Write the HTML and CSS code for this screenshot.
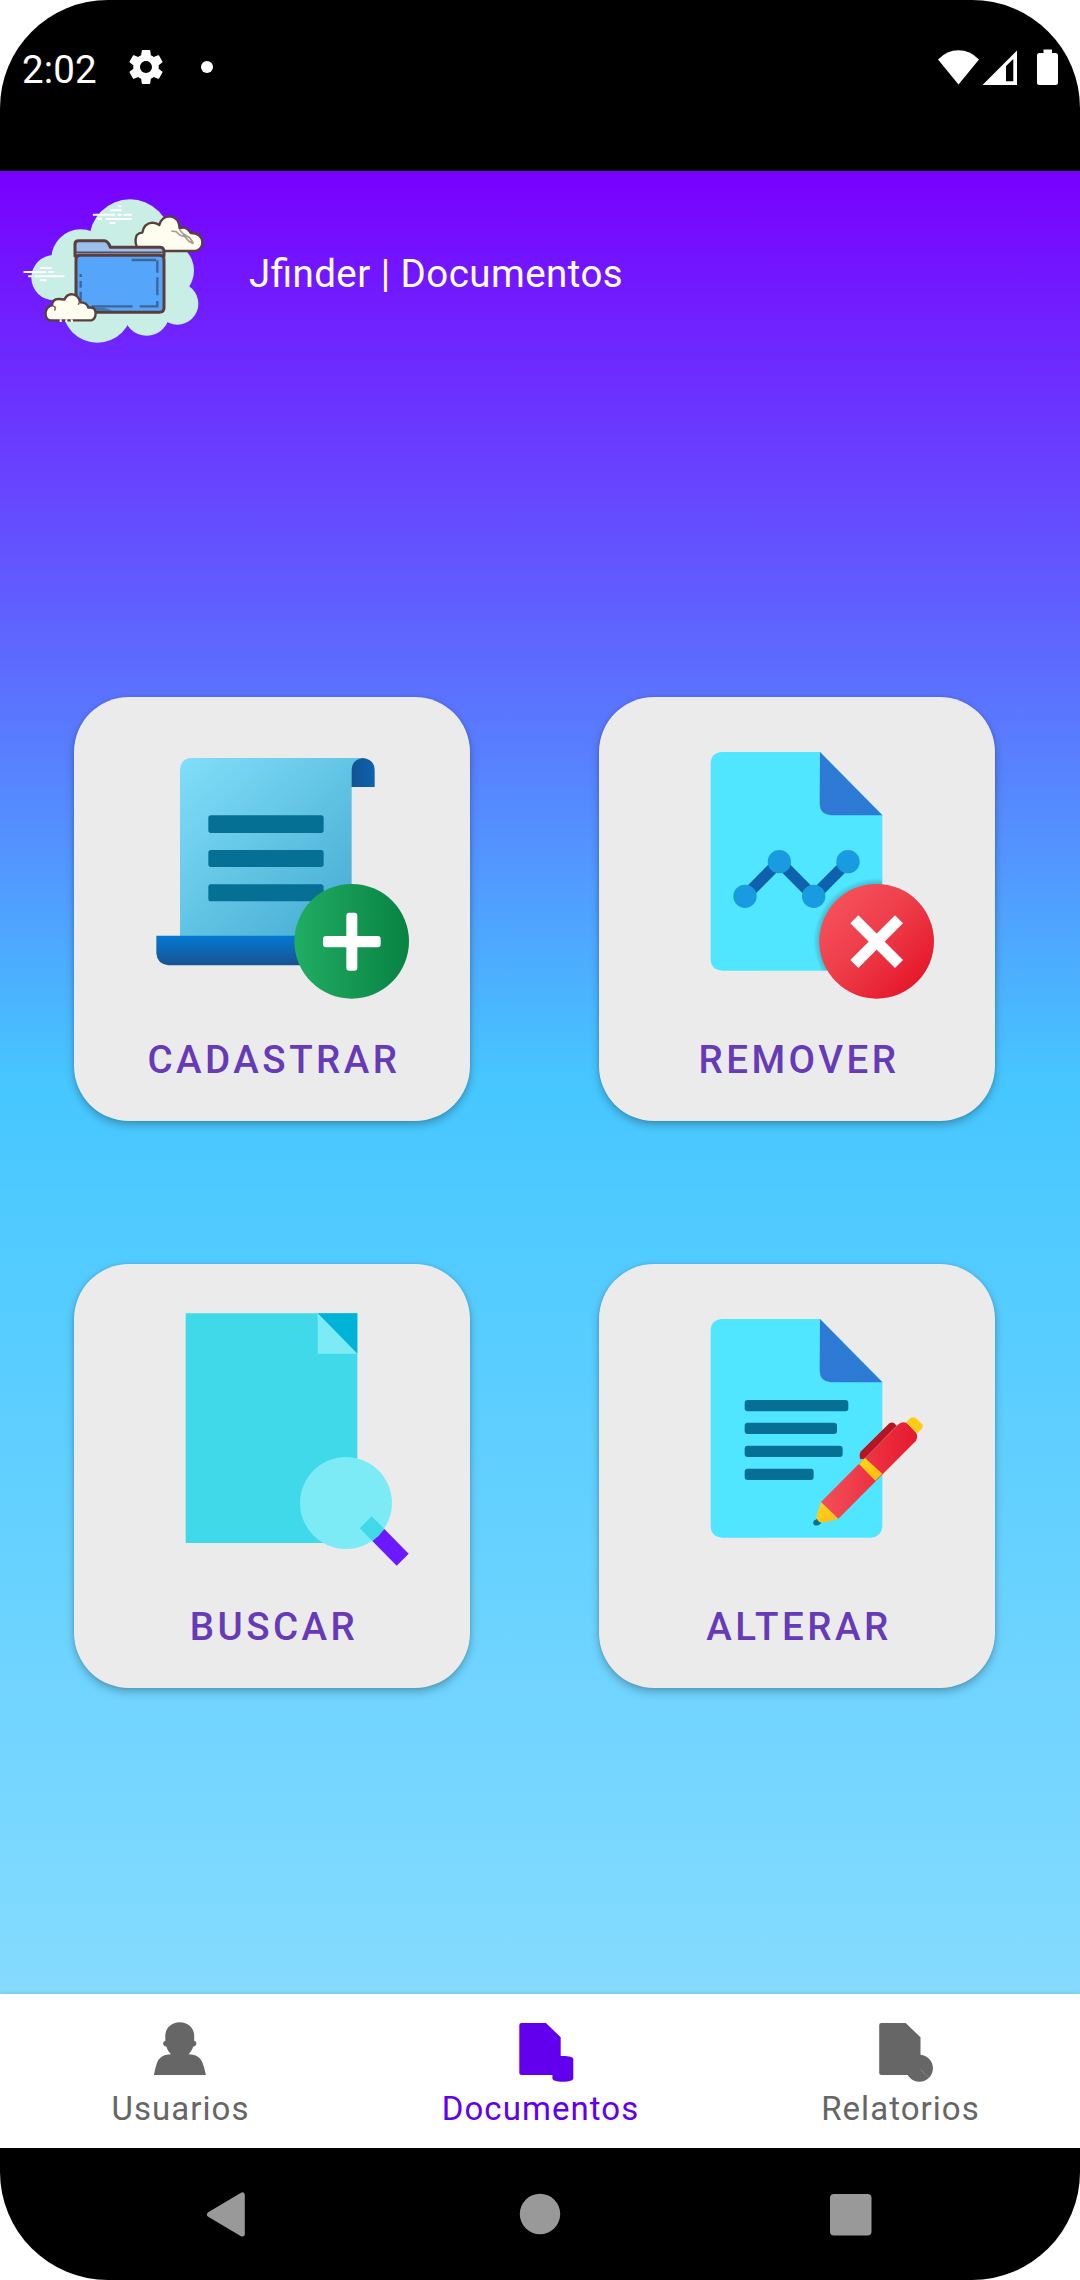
FILE: index.html
```html
<!DOCTYPE html>
<html lang="pt">
<head>
<meta charset="utf-8">
<title>Jfinder | Documentos</title>
<link rel="stylesheet" href="styles.css">
</head>
<body>
<div class="screen">
  <header class="status">
    <span class="clock">2:02</span>
    <svg class="gear" viewBox="2 2 20 20"><path fill="#fff" fill-rule="evenodd" d="M19.43 12.98c.04-.32.07-.64.07-.98s-.03-.66-.07-.98l2.11-1.65c.19-.15.24-.42.12-.64l-2-3.46c-.12-.22-.39-.3-.61-.22l-2.49 1c-.52-.4-1.08-.73-1.69-.98l-.38-2.65C14.46 2.18 14.25 2 14 2h-4c-.25 0-.46.18-.49.42l-.38 2.65c-.61.25-1.17.59-1.69.98l-2.49-1c-.23-.09-.49 0-.61.22l-2 3.46c-.13.22-.07.49.12.64l2.11 1.65c-.04.32-.07.65-.07.98s.03.66.07.98l-2.11 1.65c-.19.15-.24.42-.12.64l2 3.46c.12.22.39.3.61.22l2.49-1c.52.4 1.08.73 1.69.98l.38 2.65c.03.24.24.42.49.42h4c.25 0 .46-.18.49-.42l.38-2.65c.61-.25 1.17-.59 1.69-.98l2.49 1c.23.09.49 0 .61-.22l2-3.46c.12-.22.07-.49-.12-.64l-2.11-1.65zM12 15.5c-1.93 0-3.5-1.57-3.5-3.5s1.57-3.5 3.5-3.5 3.5 1.57 3.500 3.5-1.57 3.5-3.500 3.500z"/></svg>
    <span class="dot"></span>
    <svg class="indicators" viewBox="0 0 120 37" fill="#fff">
      <path d="M0 10.500Q9 1.300 20.500 1.300T41 10.500L20.500 35.500Z"/>
      <path fill-rule="evenodd" d="M44.500 36L79 1.500V36ZM68 17V32.300H75.300V10Z"/>
      <path d="M105.500 .500H114V4H117.500Q120 4 120 6.500V33.500Q120 36 117.500 36H101.500Q99 36 99 33.500V6.500Q99 4 101.500 4H105.500Z"/>
    </svg>
  </header>

  <main class="content">
    <div class="titlebar">
      <svg class="logo" viewBox="0 0 630 540">
        <g fill="#c8eee6">
          <circle cx="360" cy="180" r="122"/><circle cx="212" cy="236" r="88"/><circle cx="132" cy="293" r="68"/>
          <circle cx="262" cy="383" r="105"/><circle cx="410" cy="398" r="69"/><circle cx="502" cy="371" r="63"/>
          <circle cx="465" cy="272" r="87"/><path d="M200 180H480V410H200Z"/>
        </g>
        <g stroke="#fff" stroke-width="6" stroke-linecap="round" fill="none">
          <path d="M326 79h6M302 91h30M251 104h62M325 104h8M343 104h21M265 117h8M289 117h74M301 129h13"/>
          <path d="M93 264h30M43 276h64M117 276h14M57 289h8M76 289h85M92 301h15"/>
        </g>
        <path d="M388 213Q370 189 380 166Q387 158 397 158Q402 130 427 128Q439 129 448 135Q455 109 480 109Q507 112 509 145Q529 137 542 159Q573 158 577 185Q578 207 557 213Z" fill="#fffcf0" stroke="#593e3c" stroke-width="7" stroke-linejoin="round"/>
        <path d="M484 153l15 2 11 11 14 3 13 15 13 7M509 150l12 13 18 10 11 16" fill="none" stroke="#a89b91" stroke-width="5"/>
        <path d="M195 228V192Q195 182 206 182H283Q294 182 301 202H451Q462 203 462 216V228Z" fill="#9dbfeb" stroke="#593e3c" stroke-width="9" stroke-linejoin="round"/>
        <path d="M196 217H462" stroke="#5c4a4e" stroke-width="5"/>
        <path d="M198 385V239Q198 226 210 226H448Q462 226 462 240V383Q462 396 448 397H212Q198 397 198 385Z" fill="#55a6fb" stroke="#593e3c" stroke-width="9"/>
        <path d="M245 379H368M389 379H442V363M442 346V292M442 278V241M365 240H438M212 282v9M212 303v20M212 335v32" fill="none" stroke="#3b6798" stroke-width="7"/>
        <path d="M250 382Q290 381 307 393H250Z" fill="#4575ab"/>
        <path d="M120 421Q105 417 107 397Q110 379 126 376Q127 356 148 357L163 359Q171 341 188 343Q206 345 210 367Q231 367 235 383Q257 379 257 401Q256 418 244 421Z" fill="#fffcf0" stroke="#593e3c" stroke-width="7" stroke-linejoin="round"/>
        <path d="M128 377l8 5-2 10M209 367l-5 7" fill="none" stroke="#806d67" stroke-width="5"/>
        <path d="M152 418v8M169 418v8M184 418l3 8" stroke="#fff" stroke-width="6"/>
      </svg>
      <h1 class="title">Jfinder | Documentos</h1>
    </div>

    <div class="grid">
      <button class="card">
        <svg class="art" viewBox="222 132 825 825">
          <defs>
            <linearGradient id="sheet" x1="0" y1="0" x2="1" y2="1"><stop offset="0" stop-color="#81def8"/><stop offset="1" stop-color="#42a9d0"/></linearGradient>
            <linearGradient id="roll" x1="0" y1="0" x2="0" y2="1"><stop offset="0" stop-color="#0479d3"/><stop offset="1" stop-color="#175391"/></linearGradient>
            <linearGradient id="curl"><stop offset="0" stop-color="#164f8d"/><stop offset="1" stop-color="#0b62ad"/></linearGradient>
            <linearGradient id="green"><stop offset="0" stop-color="#21ad64"/><stop offset="1" stop-color="#088242"/></linearGradient>
          </defs>
          <path fill="url(#curl)" d="M858 234H909Q944 238 944 272V321H870V245Z"/>
          <path fill="url(#sheet)" d="M360 770V268Q362 236 394 234H909Q875 238 875 272V770Z"/>
          <path fill="url(#roll)" d="M289 767H800V856H325Q291 852 289 820Z"/>
          <g fill="#057093"><rect x="445" y="406" width="346" height="53" rx="8"/><rect x="445" y="510" width="346" height="51" rx="8"/><rect x="445" y="613" width="346" height="51" rx="8"/></g>
          <circle cx="875" cy="784" r="172" fill="url(#green)"/>
          <path fill="#fff" d="M868 698h15q9 0 9 9v61h61q9 0 9 9v16q0 9-9 9h-61v61q0 9-9 9h-15q-9 0-9-9v-61h-61q-9 0-9-9v-16q0-9 9-9h61v-61q0-9 9-9z"/>
        </svg>
        <span class="label">CADASTRAR</span>
      </button>
      <button class="card">
        <svg class="art" viewBox="237 132 825 825">
          <defs>
            <linearGradient id="fold" x1="0" y1="1" x2="1" y2="0"><stop offset="0" stop-color="#3079d6"/><stop offset="1" stop-color="#297cd2"/></linearGradient>
            <linearGradient id="red" x1=".15" y1=".15" x2=".85" y2=".85"><stop offset="0" stop-color="#f44f5a"/><stop offset=".45" stop-color="#ee3d4a"/><stop offset="1" stop-color="#e5192c"/></linearGradient>
            <radialGradient id="halo"><stop offset=".88" stop-color="#000" stop-opacity=".22"/><stop offset="1" stop-color="#000" stop-opacity="0"/></radialGradient>
            <clipPath id="page"><path d="M427 216H720L907 404V872H427Q393 870 392 838V250Q393 218 427 216Z"/></clipPath>
          </defs>
          <path fill="#50e6ff" d="M427 216H720L907 404V838Q905 870 873 872H427Q393 870 392 838V250Q393 218 427 216Z"/>
          <path fill="url(#fold)" d="M720 216L907 406H753Q720 404 719 372Z"/>
          <path d="M495 649L598 545L701 649L804 545" fill="none" stroke="#0d62ab" stroke-width="34"/>
          <g fill="#199be2"><circle cx="495" cy="649" r="35"/><circle cx="598" cy="545" r="35"/><circle cx="701" cy="649" r="35"/><circle cx="804" cy="545" r="35"/></g>
          <circle cx="890" cy="784" r="190" fill="url(#halo)" clip-path="url(#page)"/>
          <circle cx="890" cy="784" r="172" fill="url(#red)"/>
          <path d="M835 730L945 840M945 730L835 840" stroke="#fff" stroke-width="34" stroke-linecap="square"/>
        </svg>
        <span class="label">REMOVER</span>
      </button>
      <button class="card">
        <svg class="art" viewBox="222 123 825 825">
          <path fill="#3fd9ea" d="M377 190H892V879H377Z"/>
          <path fill="#00b3d7" d="M773 190H892V311Z"/>
          <path fill="#7cebf5" d="M773 190L892 311H773Z"/>
          <circle cx="858" cy="759" r="138" fill="#7cebf5"/>
          <path fill="#6c19ff" d="M937 873L973 837L1046 911L1010 947Z"/>
          <path fill="#3fd9ea" d="M935 799L973 837Q959 858 937 873L899 835Z"/>
        </svg>
        <span class="label">BUSCAR</span>
      </button>
      <button class="card">
        <svg class="art" viewBox="237 123 825 825">
          <defs>
            <linearGradient id="pen"><stop offset="0" stop-color="#f44f5a"/><stop offset="1" stop-color="#e5192c"/></linearGradient>
            <linearGradient id="gold" x1="0" y1="0" x2="1" y2="1"><stop offset="0" stop-color="#fed71c"/><stop offset="1" stop-color="#fcb913"/></linearGradient>
          </defs>
          <path fill="#50e6ff" d="M427 207H720L907 395V829Q905 861 873 863H427Q393 861 392 829V241Q393 209 427 207Z"/>
          <path fill="url(#fold)" d="M720 207L907 397H753Q720 395 719 363Z"/>
          <g fill="#057093"><rect x="494" y="450" width="311" height="34" rx="9"/><rect x="494" y="518" width="277" height="34" rx="9"/><rect x="494" y="587" width="294" height="34" rx="9"/><rect x="494" y="656" width="207" height="34" rx="9"/></g>
          <path fill="#057093" d="M712 806L724 820Q710 831 702 824Q696 817 704 811Z"/>
          <path fill="url(#gold)" d="M723 756L775 806Q745 817 719 817Q709 810 710 798Z"/>
          <path fill="#b31523" d="M841 628Q836 613 843 604L928 520Q935 515 942 519L950 527L853 626Z"/>
          <path fill="url(#pen)" d="M723 756L953 525Q965 512 980 519L1007 547Q1016 558 1008 572L775 806Z"/>
          <path fill="url(#gold)" d="M837 642L855 624L907 671L886 692Z"/>
          <path fill="#fecb18" d="M978 517L992 504Q999 499 1007 504L1027 523Q1031 530 1026 536L1012 550Z"/>
        </svg>
        <span class="label">ALTERAR</span>
      </button>
    </div>
  </main>

  <nav class="tabs">
    <a class="tab">
      <svg class="tabicon" viewBox="0 0 66 66"><path fill="currentColor" d="M32.800 7.300C41.500 7.300 47.200 13.500 47.200 21V26C50 26 50.500 31 46.300 31.500C45 35 43.500 37.500 41.500 39.300C50 39.600 54 43 55.800 48.500C57 52 58 56 58.900 60H6.900C7.800 56 8.500 52 9.800 48.500C11.700 43 15.500 39.600 24.100 39.300C22 37.500 20.500 35 19.300 31.500C15 31 15.500 26 18.300 26V21C18.300 13.500 24 7.300 32.800 7.300Z"/></svg>
      <span>Usuarios</span>
    </a>
    <a class="tab active">
      <svg class="tabicon" viewBox="0 0 66 66"><path fill="currentColor" d="M14.500 8H38.900L53.700 22.300V41H56C62 41 66.300 42.300 66.300 44V63.500C66.300 65.500 62 66.700 56 66.700C49.500 66.700 45.400 65.500 45.400 63.500V60H14.500Q12.300 60 12.300 58V10Q12.300 8 14.500 8Z"/></svg>
      <span>Documentos</span>
    </a>
    <a class="tab">
      <svg class="tabicon" viewBox="0 0 66 66"><g fill="currentColor"><path d="M14.500 8H38.700L53.500 22.300V60H14.500Q12.200 60 12.200 58V10Q12.200 8 14.500 8Z"/><circle cx="52.400" cy="53.200" r="13.500"/></g><path d="M53.500 54.300L61.800 62.700" stroke="#8c8c8c" stroke-width=".7"/></svg>
      <span>Relatorios</span>
    </a>
  </nav>

  <footer class="sysnav">
    <svg class="key" viewBox="0 0 60 60"><path fill="#999" stroke="#999" stroke-width="5" stroke-linejoin="round" d="M10.500 30.500L43.300 11V50Z"/></svg>
    <svg class="key" viewBox="0 0 60 60"><circle cx="30" cy="30" r="20.200" fill="#999"/></svg>
    <svg class="key" viewBox="0 0 60 60"><rect x="9" y="10" width="41.500" height="41.500" rx="4" fill="#999"/></svg>
  </footer>
</div>
</body>
</html>
```
FILE: styles.css
```css
* { box-sizing: border-box; }
body { margin: 0; background: #fff; font-family: Roboto, sans-serif; }

.screen {
  width: 1080px;
  height: 2280px;
  display: flex;
  flex-direction: column;
  background: #000;
  border-radius: 108px;
  overflow: hidden;
}

.status {
  height: 171px;
  padding: 49px 22px 0;
  display: flex;
  align-items: flex-start;
  color: #fff;
}
.clock { width: 107px; padding-top: 1px; font-size: 38.5px; line-height: 40px; letter-spacing: .1px; }
.gear { width: 34px; height: 36px; }
.dot { width: 12px; height: 12px; margin: 12px 0 0 38px; border-radius: 50%; background: #fff; }
.indicators { width: 120px; height: 37px; margin-left: auto; }

.content {
  height: 1823px;
  background: linear-gradient(#7800ff, #46c7ff 50%, #85dbff);
}
.titlebar { display: flex; align-items: center; padding: 9px 10px 0; }
.logo { width: 210px; height: 180px; }
.title {
  margin: 8px 0 0 29px;
  color: #fff;
  font-size: 38.5px;
  line-height: 46px;
  font-weight: 400;
  letter-spacing: .45px;
  font-feature-settings: "liga" 1;
}

.grid {
  display: grid;
  grid-template-columns: 396px 396px;
  gap: 143px 129px;
  padding: 337px 0 0 74px;
}
.card {
  height: 424px;
  padding: 27px 0 0;
  border: 0;
  border-radius: 55px;
  background: #ebebeb;
  box-shadow: 0 4px 8px rgba(0, 0, 0, .26), 0 0 3px rgba(0, 0, 0, .12);
  display: flex;
  flex-direction: column;
  align-items: center;
  font-family: inherit;
}
.art { width: 275px; height: 275px; margin-right: 2px; }
.label {
  margin-top: 38px;
  padding-left: 4px;
  color: #673ab7;
  font-size: 38.5px;
  line-height: 46px;
  font-weight: 500;
  letter-spacing: 3.5px;
}

.tabs {
  position: relative;
  height: 154px;
  display: grid;
  grid-template-columns: repeat(3, 1fr);
  background: #fff;
  box-shadow: 0 -1px 4px rgba(0, 0, 0, .1);
}
.tab {
  display: flex;
  flex-direction: column;
  align-items: center;
  padding-top: 21px;
  color: #666;
  font-size: 33px;
  line-height: 40px;
  letter-spacing: 1.05px;
}
.tab span { padding-left: 1px; }
.tab.active { color: #6200ee; }
.tabicon { width: 66px; height: 66px; margin-bottom: 8px; overflow: visible; }

.sysnav {
  height: 132px;
  padding: 36px 199px 0;
  display: flex;
  justify-content: space-between;
}
.key { width: 60px; height: 60px; }
```
